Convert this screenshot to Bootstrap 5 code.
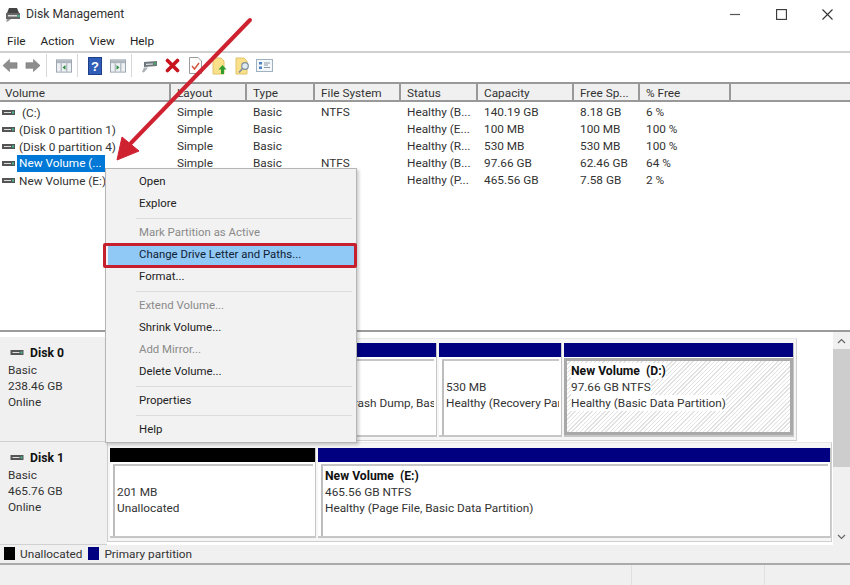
<!DOCTYPE html>
<html lang="en">
<head>
<meta charset="utf-8">
<title>Disk Management</title>
<link rel="stylesheet" href="https://cdn.jsdelivr.net/npm/bootstrap@5.3.0/dist/css/bootstrap.min.css">
<style>
html,body{margin:0;height:585px;overflow:hidden;background:#fff}
body{font-family:Roboto,"Liberation Sans",sans-serif;font-size:11.8px;color:#222;line-height:16px}
.app{position:relative;width:850px;height:585px;overflow:hidden}
.app>*{flex:none}
.titlebar{height:30px;padding:0 0 2px 5px;gap:5px;font-size:12.2px;color:#333}
.winctl{margin-left:auto;width:120px;padding:0 17px 0 0}
.menubar{height:23px;padding:1px 7px 0;gap:15px;border-bottom:2px solid #cfcfcf}
.toolbar{height:29px;padding:0 0 4px 2px}
.tsep{width:1px;height:23px;background:#d8d8d8;flex:none}
.toolbar svg{display:block;flex:none}
.g5{margin-left:5px}.g6{margin-left:6px}.g7{margin-left:7px}.g8{margin-left:8px}.g9{margin-left:9px}.g10{margin-left:10px}
.listpane{height:248px;background:#fff}
.volhead{height:20px;background:#f0f0f0;border-top:2px solid #999;border-bottom:2px solid #999;margin-bottom:2px}
.vh{border-right:2px solid #999;padding:2px 0 0 6px;flex:none;white-space:nowrap;overflow:hidden;height:16px;line-height:15px;color:#333}
.vh.c1{padding-left:5px}
.c1{width:171px}.c2{width:76px}.c3{width:68px}.c4{width:86px}.c5{width:77px}.c6{width:96px}.c7{width:66px}.c8{width:91px}
.volrow{height:17px;color:#333}
.vc{flex:none;padding-left:6px;white-space:nowrap;overflow:hidden}
.vc.c1{padding-left:2px;display:flex;align-items:center;gap:4px}
.selname{background:#0078d7;color:#fff;padding:0 3px 0 2px;margin-left:-2px;height:17px}
.splitline{height:2px;background:#9b9b9b}
.lowerpane{height:213px;background:#fff}
.scrolltrack{width:17px;flex:none;background:#f0f0f0;display:flex;flex-direction:column;align-items:center}
.scrollbtn{height:17px;display:flex;align-items:center;justify-content:center;flex:none}
.thumb{width:17px;height:118px;background:#cdcdcd;flex:none}
.diskrows{padding-top:5px;width:833px;flex:none}
.diskrow0{height:105px}
.diskrow1{height:103px}
.disklabel{width:107px;flex:none;background:#f0f0f0;padding:0 0 0 8px;border-bottom:1px solid #d0d0d0;color:#333}
.disklabel b{color:#111;font-weight:700;margin-left:6px;font-size:12.2px}
.disklabel .dname{display:flex;align-items:center;margin-left:2px;height:25px;padding-top:7px}
.diskframe{border:1px solid #cfcfcf;border-top-color:#e8e8e8;gap:2px;flex:none;background:#f6f6f6;align-self:flex-start}
.f0{width:690px;height:103px;margin-top:1px;padding:4px 2px 3px 2px}
.f1{width:725px;height:100px;padding:5px 3px 3px 2px}
.part{display:flex;flex-direction:column;flex:none;background:#fff;border-right:1px solid #c6c6c6;border-bottom:2px solid #c6c6c6}
.pbar{height:14px;background:#000080;flex:none}
.pbar.unalloc{background:#000}
.pbody{flex:1;margin:2px 2px 0 3px;border-left:2px solid #bdbdbd;border-top:2px solid #c6c6c6;padding:2px 0 0 2px;white-space:nowrap;overflow:hidden;color:#333}
.pbody.sel{margin:1px 0 0;border:3px solid #a9a9a9;padding:2px 0 0 4px;background:repeating-linear-gradient(135deg,#fff 0 2px,#e2e2e2 2px 3px)}
.pbody.sel span{background:#fff;display:table}
.pbody strong{color:#111;font-weight:700;display:block;font-size:12.2px}
.pbody .blank{height:16px;display:block}
.w1{width:97px}.w2{width:228px}.w3{width:123px}.w4{width:230px}
.w5{width:206px}.w6{width:513px}
.legend{height:20px;background:#f0f0f0;padding:0 4px 1px;gap:5px;border-bottom:2px solid #aaa;color:#333}
.swatch{width:11px;height:13px;flex:none;background:#000}
.swatch.prim{background:#000080;margin-left:1px}
.statusbar{height:20px;background:#f0f0f0}
.sc1{width:632px;border-right:1px solid #e0e0e0}
.sc2{width:133px;border-right:1px solid #e0e0e0}
.ctx.dropdown-menu{position:absolute;left:105px;top:168px;width:252px;height:275px;min-width:0;margin:0;padding:2px;background:#f2f2f2;border:1px solid #b5b5b5;border-radius:0;font-size:11.4px;box-shadow:2px 2px 3px rgba(0,0,0,.2);z-index:5}
.ctx .dropdown-item{height:22px;line-height:21px;padding:0 0 0 31px;color:#222;white-space:nowrap}
.ctx .dropdown-item.disabled{color:#8a8a8a}
.ctx .dropdown-item.active{background:#90c8f6;color:#123}
.ctx .dropdown-divider{margin:3px 2px 3px 28px;border-top:1px solid #dcdcdc;opacity:1;height:1px}
.callout{position:absolute;left:103px;top:243px;width:254px;height:25px;border:3px solid #c6202e;border-radius:2px;z-index:6;pointer-events:none}
.arrowlayer{position:absolute;left:0;top:0;z-index:7;pointer-events:none}
</style>
</head>
<body>
<div class="app d-flex flex-column">

  <div class="titlebar d-flex align-items-center">
    <svg width="16" height="15" viewBox="0 0 16 15"><path d="M4 1h8l2 5H2z" fill="#444"/><rect x="1" y="6" width="14" height="6" fill="#666"/><rect x="3" y="8" width="9" height="1.500" fill="#ddd"/><rect x="12.500" y="8" width="2" height="2" fill="#4b9"/><path d="M2 12h4l-3 2.500H1z" fill="#999"/></svg>
    <span>Disk Management</span>
    <div class="winctl d-flex align-items-center justify-content-between">
      <svg width="11" height="11" viewBox="0 0 11 11"><path d="M0 5.500h10" stroke="#555" stroke-width="1.200"/></svg>
      <svg width="11" height="11" viewBox="0 0 11 11"><rect x=".6" y=".6" width="9.800" height="9.800" fill="none" stroke="#333" stroke-width="1.100"/></svg>
      <svg width="11" height="11" viewBox="0 0 11 11"><path d="M.5.500l10 10M10.500.5l-10 10" stroke="#333" stroke-width="1.100"/></svg>
    </div>
  </div>

  <div class="menubar d-flex align-items-center">
    <span>File</span><span>Action</span><span>View</span><span>Help</span>
  </div>

  <div class="toolbar d-flex align-items-center">
    <svg width="16" height="15" viewBox="0 0 17 15"><path d="M8 1L1 7.500l7 6.500V10.500h8v-6H8z" fill="#8d8d8d" stroke="#777" stroke-width=".6"/></svg>
    <svg class="g7" width="16" height="15" viewBox="0 0 17 15"><path d="M9 1l7 6.500-7 6.500V10.500H1v-6h8z" fill="#8d8d8d" stroke="#777" stroke-width=".6"/></svg>
    <span class="tsep g5"></span>
    <svg class="g9" width="16" height="14" viewBox="0 0 17 14"><rect x=".5" y=".5" width="16" height="13" fill="#eef1f4" stroke="#98a2ac"/><rect x="1" y="1" width="15" height="3" fill="#aeb6bd"/><rect x="5" y="4" width="1" height="9" fill="#98a2ac"/><rect x="11" y="4" width="1" height="9" fill="#98a2ac"/><path d="M10 6v5L7 8.500z" fill="#2b8a3e"/></svg>
    <span class="tsep g5"></span>
    <svg class="g10" width="14" height="18" viewBox="0 0 14 18"><rect x=".5" y=".5" width="13" height="17" fill="#2f5db8" stroke="#1e3f8a"/><text x="7" y="14" text-anchor="middle" font-size="13" font-weight="700" font-family="Liberation Sans" fill="#fff">?</text></svg>
    <svg class="g8" width="16" height="14" viewBox="0 0 17 14"><rect x=".5" y=".5" width="16" height="13" fill="#eef1f4" stroke="#98a2ac"/><rect x="1" y="1" width="15" height="3" fill="#aeb6bd"/><rect x="5" y="4" width="1" height="9" fill="#98a2ac"/><rect x="11" y="4" width="1" height="9" fill="#98a2ac"/><path d="M7 6v5l3-2.500z" fill="#2b8a3e"/></svg>
    <span class="tsep g5"></span>
    <svg class="g9" width="16" height="14" viewBox="0 0 16 14"><path d="M3 3l13-1v5L3 8z" fill="#6f767b"/><path d="M5 4.800l7-.4v1.200l-7 .4z" fill="#e3e6e8"/><rect x="13" y="3.500" width="2" height="2" fill="#37b060"/><path d="M3 8.500h4L3 13.500l-2-.5z" fill="#a9b0b5"/></svg>
    <svg class="g8" width="15" height="15" viewBox="0 0 15 15"><path d="M2.500 2.500l10 10M12.500 2.500l-10 10" stroke="#c8141c" stroke-width="3.600" stroke-linecap="round"/></svg>
    <svg class="g9" width="13" height="17" viewBox="0 0 13 17"><path d="M.5.500H9l3.500 3.500v12.500H.5z" fill="#fdfdfd" stroke="#9a9a9a"/><path d="M3 9l2.500 3L10 6" fill="none" stroke="#d6503c" stroke-width="1.400"/></svg>
    <svg class="g10" width="16" height="18" viewBox="0 0 16 18"><path d="M1 1h8l3 3v13H1z" fill="#fbe08a" stroke="#e0c46a"/><path d="M10.500 8l4 4.500H12V17H9v-4.500H6.500z" fill="#2f9e2f"/></svg>
    <svg class="g7" width="15" height="18" viewBox="0 0 15 18"><path d="M1 1h8l3 3v13H1z" fill="#fbe08a" stroke="#e0c46a"/><circle cx="10" cy="9" r="3.300" fill="#dfeaf2" stroke="#7f8f9c" stroke-width="1.200"/><path d="M7.500 11.500L4 15.500" stroke="#7f8f9c" stroke-width="1.600"/></svg>
    <svg class="g6" width="17" height="13" viewBox="0 0 17 13"><rect x=".5" y=".5" width="16" height="12" fill="#f4f7fa" stroke="#9fb0bf"/><rect x="3" y="3" width="3" height="2.500" fill="#4c83c3"/><rect x="3" y="7.500" width="3" height="2.500" fill="#4c83c3"/><path d="M8 4h6M8 6h4M8 8.500h6" stroke="#8a98a5"/></svg>
  </div>

  <div class="listpane">
    <div class="volhead d-flex">
      <div class="vh c1">Volume</div><div class="vh c2">Layout</div><div class="vh c3">Type</div><div class="vh c4">File System</div><div class="vh c5">Status</div><div class="vh c6">Capacity</div><div class="vh c7">Free Sp...</div><div class="vh c8">% Free</div>
    </div>
    <div class="volrow d-flex"><div class="vc c1"><svg width="13" height="6" viewBox="0 0 13 6"><rect width="13" height="5" fill="#555"/><rect x="2" y="2" width="7" height="1" fill="#ddd"/><rect x="10" y="1.500" width="2" height="2" fill="#4b9"/></svg><span>&nbsp;(C:)</span></div><div class="vc c2">Simple</div><div class="vc c3">Basic</div><div class="vc c4">NTFS</div><div class="vc c5">Healthy (B...</div><div class="vc c6">140.19 GB</div><div class="vc c7">8.18 GB</div><div class="vc c8">6 %</div></div>
    <div class="volrow d-flex"><div class="vc c1"><svg width="13" height="6" viewBox="0 0 13 6"><rect width="13" height="5" fill="#555"/><rect x="2" y="2" width="7" height="1" fill="#ddd"/><rect x="10" y="1.500" width="2" height="2" fill="#4b9"/></svg><span>(Disk 0 partition 1)</span></div><div class="vc c2">Simple</div><div class="vc c3">Basic</div><div class="vc c4"></div><div class="vc c5">Healthy (E...</div><div class="vc c6">100 MB</div><div class="vc c7">100 MB</div><div class="vc c8">100 %</div></div>
    <div class="volrow d-flex"><div class="vc c1"><svg width="13" height="6" viewBox="0 0 13 6"><rect width="13" height="5" fill="#555"/><rect x="2" y="2" width="7" height="1" fill="#ddd"/><rect x="10" y="1.500" width="2" height="2" fill="#4b9"/></svg><span>(Disk 0 partition 4)</span></div><div class="vc c2">Simple</div><div class="vc c3">Basic</div><div class="vc c4"></div><div class="vc c5">Healthy (R...</div><div class="vc c6">530 MB</div><div class="vc c7">530 MB</div><div class="vc c8">100 %</div></div>
    <div class="volrow d-flex"><div class="vc c1"><svg width="13" height="6" viewBox="0 0 13 6"><rect width="13" height="5" fill="#555"/><rect x="2" y="2" width="7" height="1" fill="#ddd"/><rect x="10" y="1.500" width="2" height="2" fill="#4b9"/></svg><span class="selname">New Volume (...</span></div><div class="vc c2">Simple</div><div class="vc c3">Basic</div><div class="vc c4">NTFS</div><div class="vc c5">Healthy (B...</div><div class="vc c6">97.66 GB</div><div class="vc c7">62.46 GB</div><div class="vc c8">64 %</div></div>
    <div class="volrow d-flex"><div class="vc c1"><svg width="13" height="6" viewBox="0 0 13 6"><rect width="13" height="5" fill="#555"/><rect x="2" y="2" width="7" height="1" fill="#ddd"/><rect x="10" y="1.500" width="2" height="2" fill="#4b9"/></svg><span>New Volume (E:)</span></div><div class="vc c2">Simple</div><div class="vc c3">Basic</div><div class="vc c4">NTFS</div><div class="vc c5">Healthy (P...</div><div class="vc c6">465.56 GB</div><div class="vc c7">7.58 GB</div><div class="vc c8">2 %</div></div>
  </div>

  <div class="splitline"></div>

  <div class="lowerpane d-flex">
    <div class="diskrows">
      <div class="diskrow0 d-flex">
        <div class="disklabel">
          <div class="dname"><svg width="14" height="6" viewBox="0 0 13 6"><rect width="13" height="5" fill="#555"/><rect x="2" y="2" width="7" height="1" fill="#ddd"/><rect x="10" y="1.500" width="2" height="2" fill="#4b9"/></svg><b>Disk 0</b></div>
          <div>Basic</div><div>238.46 GB</div><div>Online</div>
        </div>
        <div class="diskframe f0 d-flex">
          <div class="part w1"><div class="pbar"></div><div class="pbody"><span class="blank"></span><div>100 MB</div><div>Healthy (EFI System)</div></div></div>
          <div class="part w2"><div class="pbar"></div><div class="pbody"><strong>(C:)</strong><div>140.19 GB NTFS</div><div>Healthy (Boot, Page File, Crash Dump, Basic Data Partition)</div></div></div>
          <div class="part w3"><div class="pbar"></div><div class="pbody"><span class="blank"></span><div>530 MB</div><div>Healthy (Recovery Partition)</div></div></div>
          <div class="part w4"><div class="pbar"></div><div class="pbody sel"><span><strong>New Volume&nbsp; (D:)</strong></span><span>97.66 GB NTFS</span><span>Healthy (Basic Data Partition)</span></div></div>
        </div>
      </div>
      <div class="diskrow1 d-flex">
        <div class="disklabel">
          <div class="dname"><svg width="14" height="6" viewBox="0 0 13 6"><rect width="13" height="5" fill="#555"/><rect x="2" y="2" width="7" height="1" fill="#ddd"/><rect x="10" y="1.500" width="2" height="2" fill="#4b9"/></svg><b>Disk 1</b></div>
          <div>Basic</div><div>465.76 GB</div><div>Online</div>
        </div>
        <div class="diskframe f1 d-flex">
          <div class="part w5"><div class="pbar unalloc"></div><div class="pbody"><span class="blank"></span><div>201 MB</div><div>Unallocated</div></div></div>
          <div class="part w6"><div class="pbar"></div><div class="pbody"><strong>New Volume&nbsp; (E:)</strong><div>465.56 GB NTFS</div><div>Healthy (Page File, Basic Data Partition)</div></div></div>
        </div>
      </div>
    </div>
    <div class="scrolltrack">
      <div class="scrollbtn"><svg width="9" height="6" viewBox="0 0 9 6"><path d="M1 5l3.500-3.500L8 5" fill="none" stroke="#666" stroke-width="1.200"/></svg></div>
      <div class="thumb"></div>
      <div class="flex-grow-1"></div>
      <div class="scrollbtn"><svg width="9" height="6" viewBox="0 0 9 6"><path d="M1 1l3.500 3.500L8 1" fill="none" stroke="#666" stroke-width="1.200"/></svg></div>
    </div>
  </div>

  <div class="legend d-flex align-items-center">
    <span class="swatch"></span><span>Unallocated</span>
    <span class="swatch prim"></span><span>Primary partition</span>
  </div>
  <div class="statusbar d-flex"><div class="sc1"></div><div class="sc2"></div></div>

  <div class="ctx dropdown-menu show">
    <a class="dropdown-item" href="#">Open</a>
    <a class="dropdown-item" href="#">Explore</a>
    <hr class="dropdown-divider">
    <a class="dropdown-item disabled" href="#">Mark Partition as Active</a>
    <a class="dropdown-item active" href="#">Change Drive Letter and Paths...</a>
    <a class="dropdown-item" href="#">Format...</a>
    <hr class="dropdown-divider">
    <a class="dropdown-item disabled" href="#">Extend Volume...</a>
    <a class="dropdown-item" href="#">Shrink Volume...</a>
    <a class="dropdown-item disabled" href="#">Add Mirror...</a>
    <a class="dropdown-item" href="#">Delete Volume...</a>
    <hr class="dropdown-divider">
    <a class="dropdown-item" href="#">Properties</a>
    <hr class="dropdown-divider">
    <a class="dropdown-item" href="#">Help</a>
  </div>
  <div class="callout"></div>
  <svg class="arrowlayer" width="850" height="585" viewBox="0 0 850 585">
    <path d="M250 20L131 143" stroke="#cf2231" stroke-width="4" stroke-linecap="round"/>
    <path d="M117 160L122 137L139 151z" fill="#cf2231" stroke="#cf2231" stroke-linejoin="round"/>
  </svg>
</div>
<script src="https://cdn.jsdelivr.net/npm/bootstrap@5.3.0/dist/js/bootstrap.bundle.min.js"></script>
</body>
</html>
